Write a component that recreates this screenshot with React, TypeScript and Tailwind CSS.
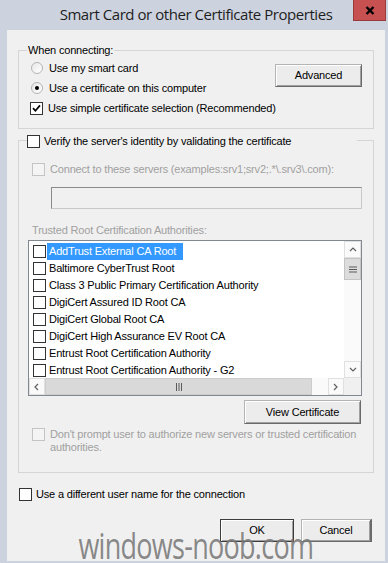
import React from 'react';

const ui = "font-['Liberation_Sans',Arial,sans-serif] text-[11px] tracking-[-0.18px] text-black";

function CheckBox({ checked = false, disabled = false }: { checked?: boolean; disabled?: boolean }) {
  return (
    <span
      className={`w-[13px] h-[13px] shrink-0 border flex items-center justify-center ${
        disabled ? 'border-[#c4c4c4] bg-[#f4f4f4]' : 'border-[#333333] bg-white'
      }`}
    >
      {checked && (
        <svg width="9" height="9" viewBox="0 0 9 9">
          <path d="M1 4.2 L3.4 6.8 L8 1.4" stroke="#000" strokeWidth="1.7" fill="none" />
        </svg>
      )}
    </span>
  );
}

function Radio({ checked = false }: { checked?: boolean }) {
  return (
    <span className="w-[12px] h-[12px] shrink-0 rounded-full border border-[#b4b4b4] bg-linear-to-br from-[#e8e8e8] to-white flex items-center justify-center">
      {checked && <span className="w-[4px] h-[4px] rounded-full bg-black" />}
    </span>
  );
}

function Button({ children, className = '', isDefault = false }: { children: React.ReactNode; className?: string; isDefault?: boolean }) {
  return (
    <div
      className={`flex items-center justify-center shrink-0 bg-[#ececec] border ${
        isDefault ? 'border-[#3c3c3c]' : 'border-[#b4b4b4] border-r-[#6a6a6a] border-b-[#6a6a6a]'
      } shadow-[inset_1px_1px_0_#ffffff,inset_-1px_-1px_0_#a0a0a0] ${className}`}
    >
      {children}
    </div>
  );
}

function Chevron({ dir }: { dir: 'up' | 'down' | 'left' | 'right' }) {
  const d = {
    up: 'M1 5 L4 2 L7 5',
    down: 'M1 2 L4 5 L7 2',
    left: 'M5 1 L2 4 L5 7',
    right: 'M2 1 L5 4 L2 7',
  }[dir];
  return (
    <svg width="8" height="8" viewBox="0 0 8 8">
      <path d={d} stroke="#606060" strokeWidth="1.2" fill="none" />
    </svg>
  );
}

const certs = [
  'AddTrust External CA Root',
  'Baltimore CyberTrust Root',
  'Class 3 Public Primary Certification Authority',
  'DigiCert Assured ID Root CA',
  'DigiCert Global Root CA',
  'DigiCert High Assurance EV Root CA',
  'Entrust Root Certification Authority',
  'Entrust Root Certification Authority - G2',
];

export default function App() {
  return (
    <div className={`w-[388px] h-[563px] bg-[#cdd3de] flex flex-col overflow-hidden ${ui}`}>
      {/* title bar */}
      <div className="h-[30px] relative shrink-0">
        <div className="pt-[4px] pl-[4px] text-center font-['Open_Sans',sans-serif] text-[15px] leading-[20px] tracking-[-0.45px] text-[#1e1e1e]">
          Smart Card or other Certificate Properties
        </div>
        <div className="absolute top-0 right-[2px] w-[33px] h-[21px] bg-[#c75050] border border-t-0 border-[#9a3b3b] flex items-center justify-center">
          <svg width="10" height="9" viewBox="0 0 10 9">
            <path d="M1.5 1 L8.5 8 M8.5 1 L1.5 8" stroke="#000" strokeWidth="2.4" />
          </svg>
        </div>
      </div>

      {/* client area */}
      <div className="ml-[7px] mr-[3px] h-[531px] bg-[#f0f0f0] relative flex flex-col">
        {/* When connecting group */}
        <div className="relative mt-[20px] ml-[11px] w-[356px] h-[79px] border border-[#d5d5d5] flex shrink-0">
          <div className="absolute left-[8px] -top-[7px] px-[1px] bg-[#f0f0f0] leading-[13px]">When connecting:</div>
          <div className="flex flex-col pl-[12px] pt-[9px] gap-[4px] flex-1 min-w-0 whitespace-nowrap">
            <div className="h-[16px] flex items-center gap-[6px]">
              <Radio />
              <span>Use my smart card</span>
            </div>
            <div className="h-[16px] flex items-center gap-[6px]">
              <Radio checked />
              <span>Use a certificate on this computer</span>
            </div>
            <div className="h-[16px] flex items-center gap-[5px] -ml-[1px]">
              <CheckBox checked />
              <span>Use simple certificate selection (Recommended)</span>
            </div>
          </div>
          <Button className="mt-[13px] mr-[11px] w-[87px] h-[23px]">Advanced</Button>
        </div>

        {/* Verify group */}
        <div className="relative mt-[11px] ml-[11px] w-[356px] h-[333px] border border-[#d5d5d5] flex flex-col shrink-0">
          <div className="absolute left-[8px] -top-[8px] w-[330px] h-[16px] bg-[#f0f0f0] flex items-center gap-[4px] whitespace-nowrap">
            <CheckBox />
            <span>Verify the server's identity by validating the certificate</span>
          </div>

          <div className="mt-[20px] ml-[13px] h-[16px] flex items-center gap-[5px] text-[#a0a0a0] whitespace-nowrap">
            <CheckBox disabled />
            <span>Connect to these servers (examples:srv1;srv2;.*\.srv3\.com):</span>
          </div>

          <div className="mt-[10px] ml-[32px] w-[311px] h-[22px] border border-[#c8c8c8] border-t-[#8a8a8a] border-l-[#8a8a8a] bg-[#f0f0f0]" />

          <div className="mt-[13px] ml-[13px] h-[16px] flex items-center text-[#a0a0a0]">
            Trusted Root Certification Authorities:
          </div>

          {/* list box */}
          <div className="mt-[2px] ml-[9px] w-[334px] h-[156px] border border-[#828790] bg-white flex">
            <div className="flex-1 flex flex-col min-w-0">
              <div className="flex-1 overflow-hidden pt-[2px]">
                {certs.map((c, i) => (
                  <div key={c} className="h-[17px] flex items-center pl-[4px]">
                    <CheckBox />
                    <span
                      className={`ml-[1px] pl-[2px] pr-[7px] h-[17px] flex items-center whitespace-nowrap ${
                        i === 0 ? 'bg-[#3399ff] text-white' : ''
                      }`}
                    >
                      {c}
                    </span>
                  </div>
                ))}
              </div>
              {/* horizontal scrollbar */}
              <div className="h-[17px] flex bg-[#f4f4f4] shrink-0">
                <div className="w-[16px] h-[17px] border border-[#e0e0e0] bg-[#fafafa] flex items-center justify-center">
                  <Chevron dir="left" />
                </div>
                <div className="w-[267px] h-[17px] bg-[#d9d9d9] border border-[#cdcdcd] flex items-center justify-center">
                  <svg width="8" height="8" viewBox="0 0 8 8">
                    <path d="M1.5 0 V8 M4 0 V8 M6.5 0 V8" stroke="#5a5a5a" strokeWidth="1" />
                  </svg>
                </div>
                <div className="flex-1 bg-[#fafafa]" />
                <div className="w-[16px] h-[17px] border border-[#e0e0e0] bg-[#fafafa] flex items-center justify-center">
                  <Chevron dir="right" />
                </div>
              </div>
            </div>
            {/* vertical scrollbar */}
            <div className="w-[17px] flex flex-col shrink-0">
              <div className="h-[17px] border border-[#e0e0e0] bg-[#fafafa] flex items-center justify-center">
                <Chevron dir="up" />
              </div>
              <div className="h-[22px] bg-[#dcdcdc] border border-[#c4c4c4] flex items-center justify-center">
                <svg width="8" height="7" viewBox="0 0 8 7">
                  <path d="M0 1 H8 M0 3.5 H8 M0 6 H8" stroke="#5a5a5a" strokeWidth="1" />
                </svg>
              </div>
              <div className="flex-1 bg-[#fafafa]" />
              <div className="h-[17px] border border-[#e0e0e0] bg-[#fafafa] flex items-center justify-center">
                <Chevron dir="down" />
              </div>
              <div className="h-[17px] bg-[#f0f0f0]" />
            </div>
          </div>

          <Button className="mt-[4px] ml-auto mr-[12px] w-[117px] h-[24px]">View Certificate</Button>

          <div className="mt-[4px] ml-[13px] flex gap-[5px] text-[#a0a0a0] leading-[13px]">
            <CheckBox disabled />
            <span className="w-[312px]">Don't prompt user to authorize new servers or trusted certification authorities.</span>
          </div>
        </div>

        <div className="mt-[13px] ml-[12px] h-[16px] flex items-center gap-[4px]">
          <CheckBox />
          <span>Use a different user name for the connection</span>
        </div>

        <div className="mt-[17px] flex justify-end gap-[7px] mr-[13px]">
          <Button isDefault className="w-[74px] h-[23px]">OK</Button>
          <Button className="w-[71px] h-[23px] border-r-2">Cancel</Button>
        </div>

        {/* watermark */}
        <div className="absolute left-0 right-0 bottom-[-6px] text-center font-['Open_Sans',sans-serif] text-[37px] leading-[44px] tracking-[-1px] text-[#7a7a7a]/90 pointer-events-none">
          <span className="inline-block scale-x-[0.73]">windows-noob.com</span>
        </div>
      </div>
    </div>
  );
}
